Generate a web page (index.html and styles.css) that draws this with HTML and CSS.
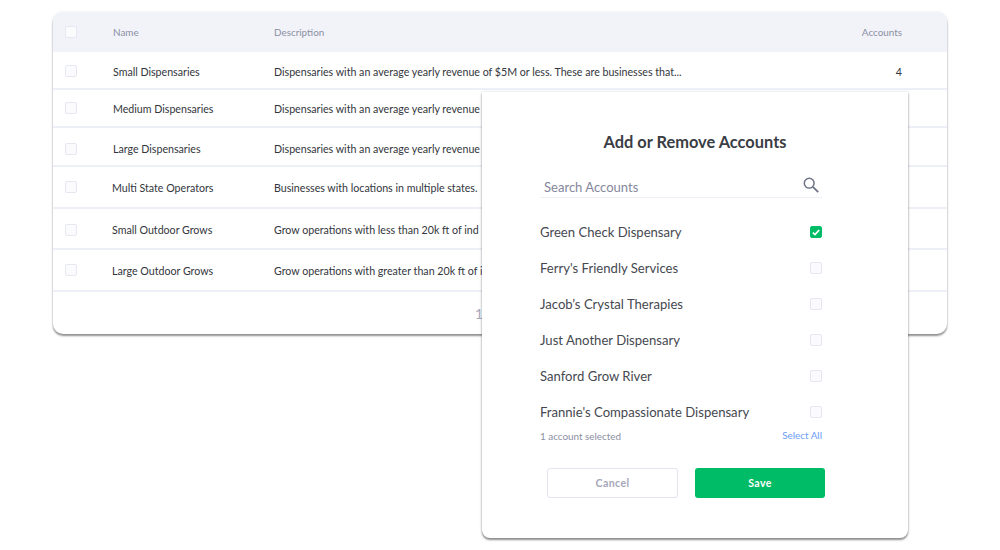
FILE: index.html
```html
<!DOCTYPE html>
<html lang="en">
<head>
    <meta charset="UTF-8">
    <meta name="viewport" content="width=device-width, initial-scale=1.0">
    <title>Account Groups</title>
    <link rel="stylesheet" href="styles.css">
</head>
<body>

<div class="page">
    <div class="table-card">
        <div class="row row-head">
            <span class="box"></span>
            <span class="name">Name</span>
            <span class="desc">Description</span>
            <span class="count">Accounts</span>
        </div>
        <div class="row row-38 drop-1">
            <span class="box"></span>
            <span class="name">Small Dispensaries</span>
            <span class="desc">Dispensaries with an average yearly revenue of $5M or less. These are businesses that...</span>
            <span class="count">4</span>
        </div>
        <div class="row row-38">
            <span class="box"></span>
            <span class="name">Medium Dispensaries</span>
            <span class="desc">Dispensaries with an average yearly revenue</span>
        </div>
        <div class="row row-39 drop-2">
            <span class="box"></span>
            <span class="name">Large Dispensaries</span>
            <span class="desc">Dispensaries with an average yearly revenue</span>
        </div>
        <div class="row row-42 shifted">
            <span class="box"></span>
            <span class="name">Multi State Operators</span>
            <span class="desc">Businesses with locations in multiple states.</span>
        </div>
        <div class="row row-41 shifted drop-1">
            <span class="box"></span>
            <span class="name">Small Outdoor Grows</span>
            <span class="desc">Grow operations with less than 20k ft of ind</span>
        </div>
        <div class="row row-42 shifted">
            <span class="box"></span>
            <span class="name">Large Outdoor Grows</span>
            <span class="desc">Grow operations with greater than 20k ft of i</span>
        </div>
        <div class="pager"><span>1</span></div>
    </div>

    <div class="modal">
        <h1>Add or Remove Accounts</h1>

        <div class="search">
            <span>Search Accounts</span>
            <svg width="16" height="16" viewBox="0 0 16 16" fill="none" stroke="#6f7387" stroke-width="1.5">
                <circle cx="6.2" cy="6.2" r="4.9"/>
                <path d="M9.9 9.9 L15.2 15.2" stroke-width="1.8"/>
            </svg>
        </div>

        <ul class="account-list">
            <li>Green Check Dispensary
                <span class="box checked">
                    <svg width="8" height="7" viewBox="0 0 8 7" fill="none" stroke="#fff" stroke-width="1.8"><path d="M0.8 3.6 L3 5.6 L7.2 1"/></svg>
                </span>
            </li>
            <li>Ferry's Friendly Services <span class="box"></span></li>
            <li>Jacob’s Crystal Therapies <span class="box"></span></li>
            <li>Just Another Dispensary <span class="box"></span></li>
            <li>Sanford Grow River <span class="box"></span></li>
            <li>Frannie's Compassionate Dispensary <span class="box"></span></li>
        </ul>

        <div class="selected-line">
            <span class="selected-count">1 account selected</span>
            <span class="select-all">Select All</span>
        </div>

        <div class="button-group">
            <button class="btn-cancel">Cancel</button>
            <button class="btn-save">Save</button>
        </div>
    </div>
</div>

</body>
</html>
```

FILE: styles.css
```css
html, body {
    height: 100%;
}

body {
    font-family: 'Lato', sans-serif;
    margin: 0;
    padding: 0;
    background-color: #fff;
    color: #3a3d44;
    overflow: hidden;
}

.page {
    position: relative;
    padding: 12px 53px 0 53px;
}

.table-card {
    background-color: #fff;
    border-radius: 10px;
    box-shadow: 0 2px 2px rgba(60, 60, 60, 0.55), 0 0 2px rgba(130, 135, 160, 0.25);
    overflow: hidden;
}

.row {
    display: grid;
    grid-template-columns: 48px 161px 1fr 90px;
    align-items: center;
    padding: 0 45px 0 12px;
    border-bottom: 2px solid #eef0f7;
    box-sizing: border-box;
    font-size: 10.65px;
    color: #33363c;
}

.row .name,
.row .desc {
    white-space: nowrap;
}

.row .count {
    text-align: right;
}

.row-head {
    height: 40px;
    background-color: #f2f3f9;
    border-bottom: none;
    font-size: 9.9px;
    color: #8b8fa3;
}

.row-38 { height: 38px; }
.row-39 { height: 39px; }
.row-41 { height: 41px; }
.row-42 { height: 42px; }

.drop-1 { padding-top: 2px; }
.drop-2 { padding-top: 4px; }

.shifted .name {
    margin-left: -1px;
}

.pager {
    height: 42px;
    display: flex;
    align-items: center;
    padding-left: 422px;
    font-size: 14px;
    color: #a5a8ba;
}

.box {
    display: flex;
    align-items: center;
    justify-content: center;
    width: 12px;
    height: 12px;
    box-sizing: border-box;
    border: 1px solid #e6e8f1;
    border-radius: 2px;
    background-color: #fbfbfd;
}

.box.checked {
    background-color: #00bc66;
    border-color: #00bc66;
}

.modal {
    position: absolute;
    left: 482px;
    top: 92px;
    width: 426px;
    height: 446px;
    box-sizing: border-box;
    padding: 39px 86px 0 58px;
    background-color: #fff;
    border-radius: 0 0 8px 8px;
    box-shadow: 0 2px 2px rgba(60, 60, 60, 0.55), 0 0 3px rgba(130, 135, 160, 0.35);
}

.modal h1 {
    margin: 0 -86px 0 -58px;
    text-align: center;
    font-size: 16.4px;
    font-weight: 700;
    line-height: 22px;
    color: #3a3d44;
}

.search {
    display: flex;
    justify-content: space-between;
    align-items: flex-end;
    height: 30px;
    margin-top: 15px;
    padding: 0 3px 2px 4px;
    box-sizing: border-box;
    border-bottom: 1px solid #eef0f7;
    font-size: 13.05px;
    color: #85889c;
}

.search svg {
    margin-bottom: 2px;
}

.account-list {
    list-style-type: none;
    margin: 16px 0 0 0;
    padding: 0;
}

.account-list li {
    display: flex;
    justify-content: space-between;
    align-items: center;
    height: 36px;
    font-size: 13.1px;
    color: #45484f;
}

.selected-line {
    display: flex;
    justify-content: space-between;
    align-items: flex-start;
    margin-top: -2px;
    font-size: 9.9px;
    line-height: 14px;
}

.selected-count {
    color: #8b8fa3;
    margin-top: 1px;
}

.select-all {
    color: #6c9bf5;
}

.button-group {
    display: flex;
    gap: 17px;
    margin-top: 25px;
    padding-left: 7px;
}

.button-group button {
    flex: none;
    height: 30px;
    box-sizing: border-box;
    border-radius: 3px;
    font-family: 'Lato', sans-serif;
    font-size: 10.6px;
    font-weight: 700;
    letter-spacing: 0.4px;
}

.btn-cancel {
    width: 131px;
    background-color: #fff;
    border: 1px solid #e3e5ef;
    color: #a5a8ba;
}

.btn-save {
    width: 130px;
    background-color: #00bc66;
    border: none;
    color: #fff;
}
```
